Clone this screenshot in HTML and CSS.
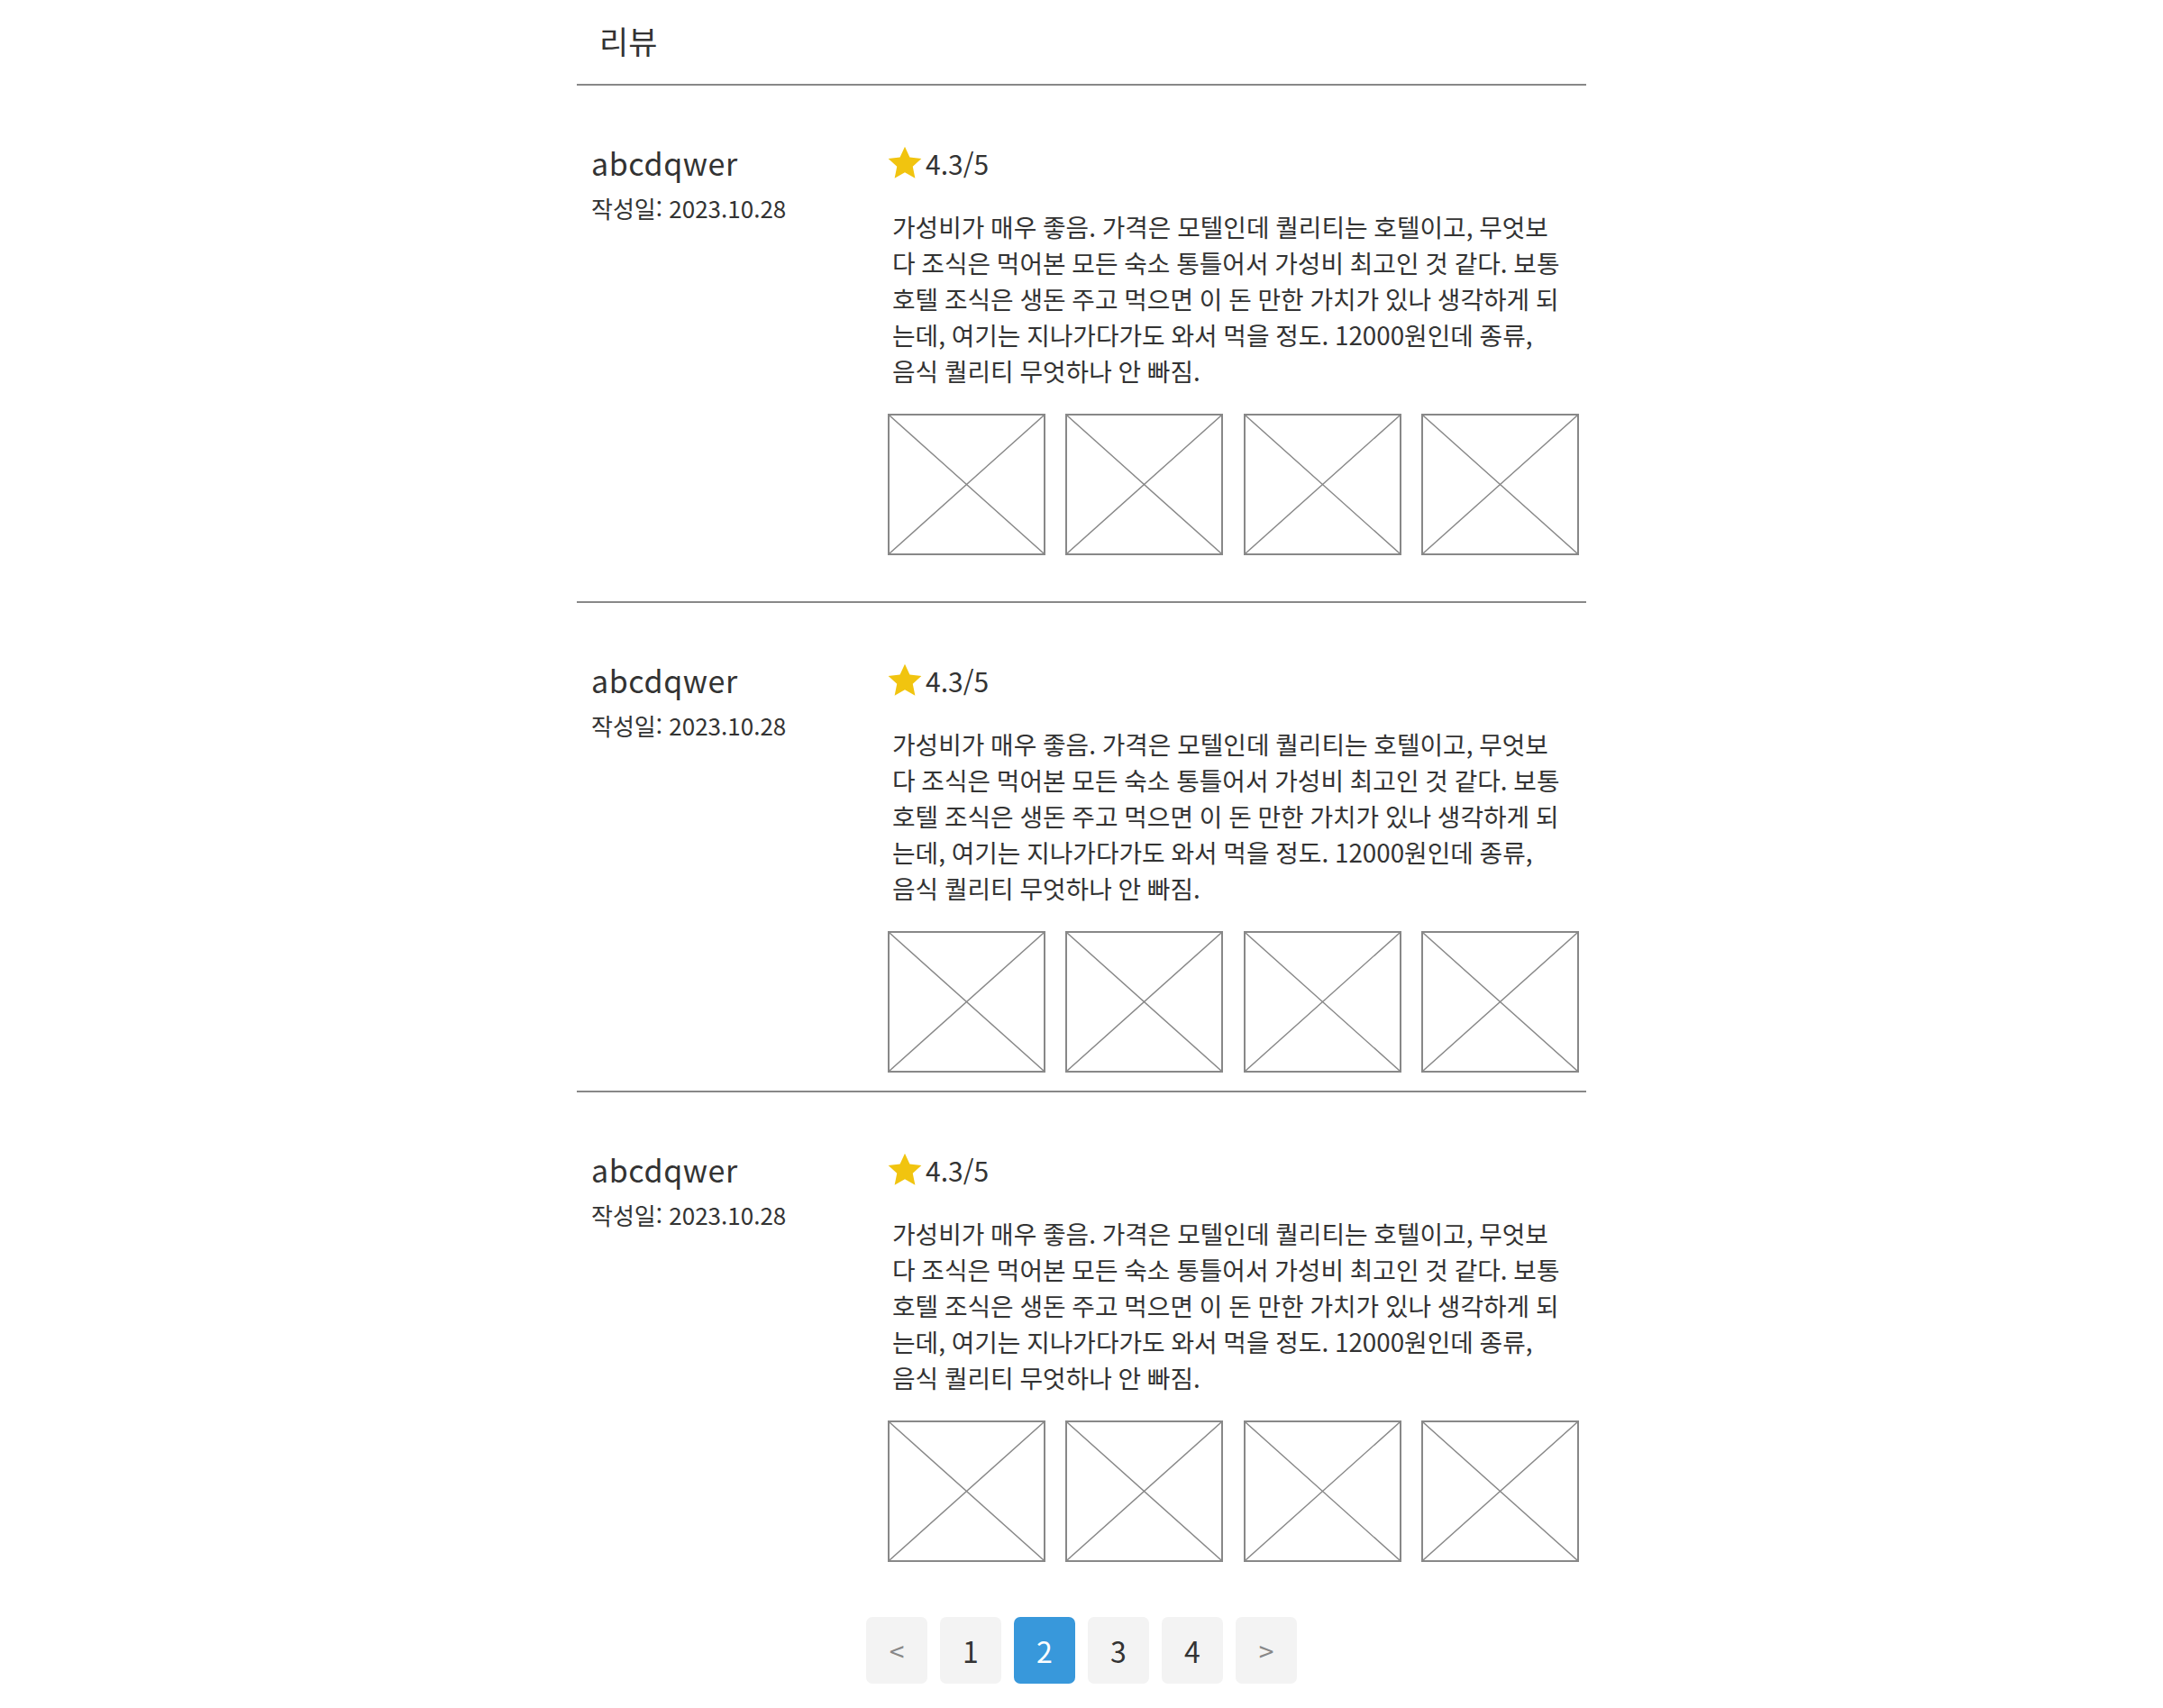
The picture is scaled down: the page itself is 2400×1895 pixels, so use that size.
FILE: index.html
```html
<!DOCTYPE html>
<html lang="ko">
<head>
<meta charset="utf-8">
<title>리뷰</title>
<link rel="stylesheet" href="styles.css">
</head>
<body>
<section class="reviews">
  <h2 class="reviews__title">리뷰</h2>

  <article class="review">
    <div class="review__author">
      <div class="review__name">abcdqwer</div>
      <div class="review__date">작성일: 2023.10.28</div>
    </div>
    <div class="review__main">
      <div class="review__rating">
        <svg class="star" viewBox="0 0 24 24"><polygon points="12,1.5 15.1,8.3 22.5,9.1 17,14.1 18.5,21.5 12,17.8 5.5,21.5 7,14.1 1.5,9.1 8.9,8.3"/></svg>
        <span>4.3/5</span>
      </div>
      <p class="review__text">가성비가 매우 좋음. 가격은 모텔인데 퀄리티는 호텔이고, 무엇보다 조식은 먹어본 모든 숙소 통틀어서 가성비 최고인 것 같다. 보통 호텔 조식은 생돈 주고 먹으면 이 돈 만한 가치가 있나 생각하게 되는데, 여기는 지나가다가도 와서 먹을 정도. 12000원인데 종류, 음식 퀄리티 무엇하나 안 빠짐.</p>
      <div class="review__photos">
        <div class="photo"><svg viewBox="0 0 100 100" preserveAspectRatio="none"><line x1="0" y1="0" x2="100" y2="100"/><line x1="100" y1="0" x2="0" y2="100"/></svg></div>
        <div class="photo"><svg viewBox="0 0 100 100" preserveAspectRatio="none"><line x1="0" y1="0" x2="100" y2="100"/><line x1="100" y1="0" x2="0" y2="100"/></svg></div>
        <div class="photo"><svg viewBox="0 0 100 100" preserveAspectRatio="none"><line x1="0" y1="0" x2="100" y2="100"/><line x1="100" y1="0" x2="0" y2="100"/></svg></div>
        <div class="photo"><svg viewBox="0 0 100 100" preserveAspectRatio="none"><line x1="0" y1="0" x2="100" y2="100"/><line x1="100" y1="0" x2="0" y2="100"/></svg></div>
      </div>
    </div>
  </article>

  <article class="review">
    <div class="review__author">
      <div class="review__name">abcdqwer</div>
      <div class="review__date">작성일: 2023.10.28</div>
    </div>
    <div class="review__main">
      <div class="review__rating">
        <svg class="star" viewBox="0 0 24 24"><polygon points="12,1.5 15.1,8.3 22.5,9.1 17,14.1 18.5,21.5 12,17.8 5.5,21.5 7,14.1 1.5,9.1 8.9,8.3"/></svg>
        <span>4.3/5</span>
      </div>
      <p class="review__text">가성비가 매우 좋음. 가격은 모텔인데 퀄리티는 호텔이고, 무엇보다 조식은 먹어본 모든 숙소 통틀어서 가성비 최고인 것 같다. 보통 호텔 조식은 생돈 주고 먹으면 이 돈 만한 가치가 있나 생각하게 되는데, 여기는 지나가다가도 와서 먹을 정도. 12000원인데 종류, 음식 퀄리티 무엇하나 안 빠짐.</p>
      <div class="review__photos">
        <div class="photo"><svg viewBox="0 0 100 100" preserveAspectRatio="none"><line x1="0" y1="0" x2="100" y2="100"/><line x1="100" y1="0" x2="0" y2="100"/></svg></div>
        <div class="photo"><svg viewBox="0 0 100 100" preserveAspectRatio="none"><line x1="0" y1="0" x2="100" y2="100"/><line x1="100" y1="0" x2="0" y2="100"/></svg></div>
        <div class="photo"><svg viewBox="0 0 100 100" preserveAspectRatio="none"><line x1="0" y1="0" x2="100" y2="100"/><line x1="100" y1="0" x2="0" y2="100"/></svg></div>
        <div class="photo"><svg viewBox="0 0 100 100" preserveAspectRatio="none"><line x1="0" y1="0" x2="100" y2="100"/><line x1="100" y1="0" x2="0" y2="100"/></svg></div>
      </div>
    </div>
  </article>

  <article class="review">
    <div class="review__author">
      <div class="review__name">abcdqwer</div>
      <div class="review__date">작성일: 2023.10.28</div>
    </div>
    <div class="review__main">
      <div class="review__rating">
        <svg class="star" viewBox="0 0 24 24"><polygon points="12,1.5 15.1,8.3 22.5,9.1 17,14.1 18.5,21.5 12,17.8 5.5,21.5 7,14.1 1.5,9.1 8.9,8.3"/></svg>
        <span>4.3/5</span>
      </div>
      <p class="review__text">가성비가 매우 좋음. 가격은 모텔인데 퀄리티는 호텔이고, 무엇보다 조식은 먹어본 모든 숙소 통틀어서 가성비 최고인 것 같다. 보통 호텔 조식은 생돈 주고 먹으면 이 돈 만한 가치가 있나 생각하게 되는데, 여기는 지나가다가도 와서 먹을 정도. 12000원인데 종류, 음식 퀄리티 무엇하나 안 빠짐.</p>
      <div class="review__photos">
        <div class="photo"><svg viewBox="0 0 100 100" preserveAspectRatio="none"><line x1="0" y1="0" x2="100" y2="100"/><line x1="100" y1="0" x2="0" y2="100"/></svg></div>
        <div class="photo"><svg viewBox="0 0 100 100" preserveAspectRatio="none"><line x1="0" y1="0" x2="100" y2="100"/><line x1="100" y1="0" x2="0" y2="100"/></svg></div>
        <div class="photo"><svg viewBox="0 0 100 100" preserveAspectRatio="none"><line x1="0" y1="0" x2="100" y2="100"/><line x1="100" y1="0" x2="0" y2="100"/></svg></div>
        <div class="photo"><svg viewBox="0 0 100 100" preserveAspectRatio="none"><line x1="0" y1="0" x2="100" y2="100"/><line x1="100" y1="0" x2="0" y2="100"/></svg></div>
      </div>
    </div>
  </article>

  <nav class="pager">
    <a class="pager__btn pager__btn--arrow">&lt;</a>
    <a class="pager__btn">1</a>
    <a class="pager__btn pager__btn--active">2</a>
    <a class="pager__btn">3</a>
    <a class="pager__btn">4</a>
    <a class="pager__btn pager__btn--arrow">&gt;</a>
  </nav>
</section>
</body>
</html>
```
FILE: styles.css
```css
* { box-sizing: border-box; }
html, body { margin: 0; padding: 0; background: #fff; }
body {
  font-family: "Noto Sans CJK KR", "Noto Sans", sans-serif;
  color: #333;
}
.reviews {
  width: 1120px;
  margin: 0 auto;
}
.reviews__title {
  margin: 0;
  padding: 20px 0 0 25px;
  height: 95px;
  font-size: 35px;
  font-weight: 400;
  line-height: 50px;
  border-bottom: 2px solid #888;
}
.review {
  display: flex;
  padding: 64px 0 20px 16px;
  border-bottom: 2px solid #888;
}
.review:first-of-type { padding-bottom: 51px; }
.review:last-of-type { border-bottom: none; padding-bottom: 0; }
.review__author {
  width: 329px;
  flex: none;
}
.review__name {
  font-size: 34px;
  letter-spacing: 0.6px;
  line-height: 44px;
}
.review__date {
  font-size: 26px;
  line-height: 36px;
  margin-top: 10px;
}
.review__main { flex: 1; }
.review__rating {
  display: flex;
  align-items: center;
  height: 44px;
  font-size: 30px;
}
.star {
  width: 42px;
  height: 42px;
  fill: #f1c40f;
  margin-left: -2px;
  margin-right: 2px;
}
.review__text {
  margin: 28px 0 0;
  padding-left: 5px;
  width: 747px;
  font-size: 27.8px;
  line-height: 40px;
  word-spacing: -1px;
}
.review__photos {
  display: flex;
  justify-content: space-between;
  width: 767px;
  margin-top: 28px;
}
.photo {
  width: 175px;
  height: 157px;
  border: 2px solid #888;
}
.photo svg {
  display: block;
  width: 100%;
  height: 100%;
}
.photo line {
  stroke: #888;
  stroke-width: 1.4;
  vector-effect: non-scaling-stroke;
}
.pager {
  display: flex;
  justify-content: center;
  gap: 14px;
  margin-top: 61px;
  padding-bottom: 27px;
}
.pager__btn {
  width: 68px;
  height: 74px;
  border-radius: 7px;
  background: #f3f3f3;
  display: flex;
  align-items: center;
  justify-content: center;
  font-size: 32px;
  color: #333;
}
.pager__btn--arrow { color: #888; font-size: 30px; }
.pager__btn--active { background: #3898db; color: #fff; }
```
